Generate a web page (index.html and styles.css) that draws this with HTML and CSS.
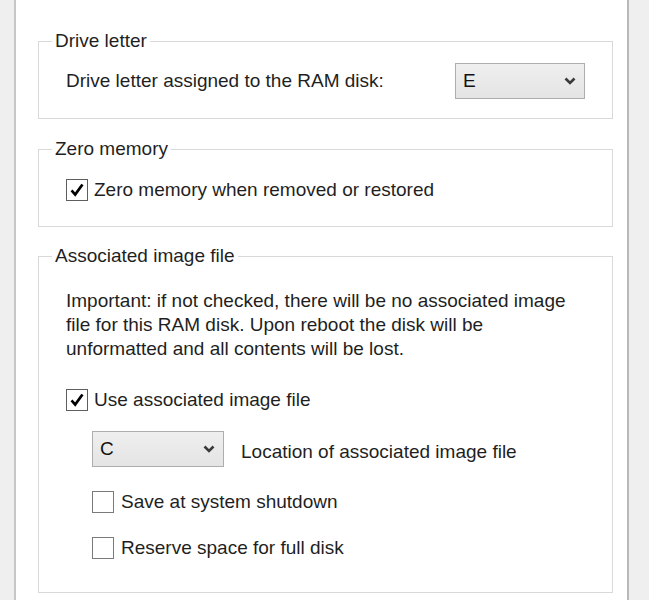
FILE: index.html
```html
<!DOCTYPE html>
<html>
<head>
<meta charset="utf-8">
<link rel="stylesheet" href="styles.css">
</head>
<body>
<div class="panel">
  <fieldset class="group g1">
    <legend>Drive letter</legend>
    <div class="row spread">
      <span>Drive letter assigned to the RAM disk:</span>
      <div class="combo combo-e"><span>E</span><svg class="chev" viewBox="0 0 12 8"><path d="M1.5 1.5 L6 6 L10.5 1.5"/></svg></div>
    </div>
  </fieldset>

  <fieldset class="group g2">
    <legend>Zero memory</legend>
    <label class="check">
      <span class="box"><svg viewBox="0 0 22 22"><path d="M5 11.5 L9 16 L17 5"/></svg></span>
      <span>Zero memory when removed or restored</span>
    </label>
  </fieldset>

  <fieldset class="group g3">
    <legend>Associated image file</legend>
    <p class="note">Important: if not checked, there will be no associated image<br>file for this RAM disk. Upon reboot the disk will be<br>unformatted and all contents will be lost.</p>
    <label class="check use">
      <span class="box"><svg viewBox="0 0 22 22"><path d="M5 11.5 L9 16 L17 5"/></svg></span>
      <span>Use associated image file</span>
    </label>
    <div class="sub">
      <div class="row loc">
        <div class="combo combo-c"><span>C</span><svg class="chev" viewBox="0 0 12 8"><path d="M1.5 1.5 L6 6 L10.5 1.5"/></svg></div>
        <span class="loc-label">Location of associated image file</span>
      </div>
      <label class="check save">
        <span class="box empty"></span>
        <span>Save at system shutdown</span>
      </label>
      <label class="check reserve">
        <span class="box empty"></span>
        <span>Reserve space for full disk</span>
      </label>
    </div>
  </fieldset>
</div>
</body>
</html>
```

FILE: styles.css
```css
html, body {
  margin: 0;
  padding: 0;
  background: #efefef;
  height: 600px;
  overflow: hidden;
}
body {
  font-family: "Liberation Sans", Arial, sans-serif;
  font-size: 19px;
  color: #1f1f1f;
}
.panel {
  margin-left: 14px;
  width: 615px;
  height: 600px;
  box-sizing: border-box;
  background: #ffffff;
  border-left: 2px solid #c6c6c6;
  border-right: 2px solid #b9b9b9;
  padding: 30px 14px 0 22px;
}
.group {
  margin: 0;
  padding: 0 27px;
  border: 1px solid #d9d9d9;
  min-width: 0;
}
.group legend {
  margin-left: -14px;
  padding: 0 3px;
  line-height: 22px;
  height: 22px;
}
.g1 { padding-top: 11px; padding-bottom: 19px; }
.g2 { margin-top: 19px; padding-top: 18px; padding-bottom: 24px; }
.g3 { margin-top: 18px; padding-top: 22px; padding-bottom: 32px; }

.row {
  display: flex;
  align-items: center;
}
.spread { justify-content: space-between; }

.combo {
  height: 36px;
  box-sizing: border-box;
  border: 1px solid #adadad;
  background: linear-gradient(#efefef, #e4e4e4);
  display: flex;
  align-items: center;
  justify-content: space-between;
  padding: 0 8px 0 7px;
  color: #111;
}
.combo-e { width: 130px; }
.combo-c { width: 132px; }
.chev {
  width: 12px;
  height: 8px;
  fill: none;
  stroke: #3a3a3a;
  stroke-width: 2.6;
}

.check {
  display: flex;
  align-items: center;
  height: 24px;
  gap: 6px;
}
.box {
  width: 22px;
  height: 22px;
  box-sizing: border-box;
  border: 1px solid #5e5e5e;
  background: #fff;
  display: flex;
}
.box.empty { border-color: #7a7a7a; }
.box svg {
  width: 20px;
  height: 20px;
  fill: none;
  stroke: #000;
  stroke-width: 3;
}

.note {
  margin: 0;
  line-height: 24px;
}
.use { margin-top: 27px; }
.sub { padding-left: 26px; }
.loc { margin-top: 19px; }
.loc-label { margin-left: 17px; padding-top: 5px; }
.save { margin-top: 23px; gap: 7px; }
.reserve { margin-top: 22px; gap: 7px; }
```
